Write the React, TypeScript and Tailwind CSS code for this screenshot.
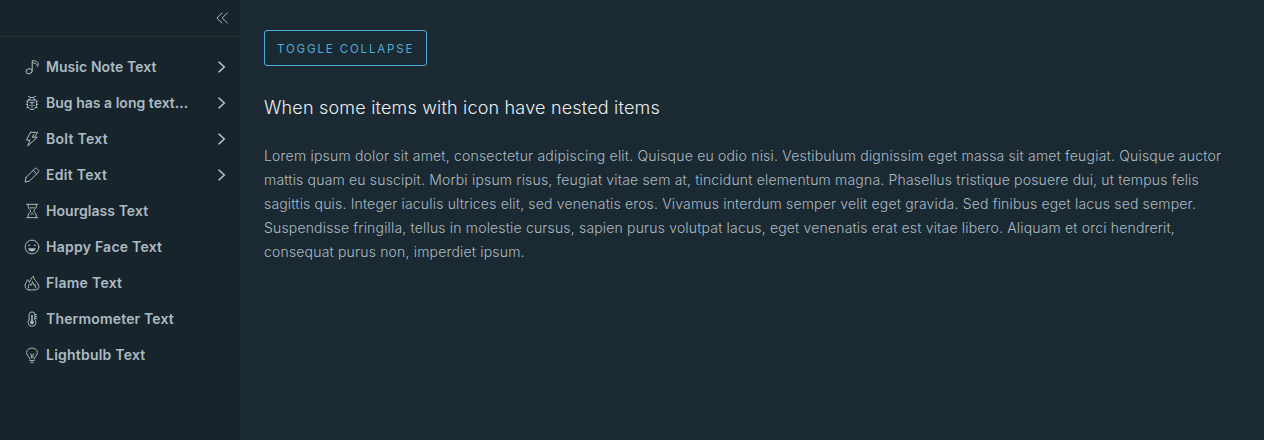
import React, { useState } from "react";

type IconProps = { children: React.ReactNode };

function Icon({ children }: IconProps) {
  return (
    <svg
      viewBox="0 0 36 36"
      className="size-4 shrink-0"
      fill="none"
      stroke="currentColor"
      strokeWidth="2.200"
      strokeLinecap="round"
      strokeLinejoin="round"
      aria-hidden="true"
    >
      {children}
    </svg>
  );
}

const icons = {
  note: (
    <Icon>
      <ellipse cx="11.500" cy="27.500" rx="6.800" ry="5.300" transform="rotate(-18 11.5 27.5)" />
      <path d="M18.500 26V3.500c7 .2 13.500 2.500 13.500 7.500 0 2-.8 4.300-2 6M18.500 8.500c5.500 0 9.500 1.500 11 5" />
    </Icon>
  ),
  bug: (
    <Icon>
      <path d="M11.500 11c0-3.500 3-5.500 6.500-5.500s6.500 2 6.500 5.500M10 3.500h3l1.500 2M26 3.500h-3l-1.500 2M9.500 11.500h17c1.500 2.500 2 5.500 2 8C28.500 28 24 33 18 33S7.500 28 7.500 19.500c0-2.500.5-5.500 2-8ZM18 17v12M13.500 17h9M5.500 14l2 .8M30.500 14l-2 .8M5 21h2.500M31 21h-2.500M6 29l3-1.500M30 29l-3-1.500M12.500 23.500h1M22.500 23.500h1" />
    </Icon>
  ),
  bolt: (
    <Icon>
      <path d="M14.500 3H31l-7.500 11H30L8.500 33.500l5-13H5.500L14.500 3ZM23.500 14H18l4.500-7" />
    </Icon>
  ),
  edit: (
    <Icon>
      <path d="M4.500 23.500 24.500 3.800c1.500-1.500 3.300-1.500 4.800 0l3 3c1.500 1.500 1.500 3.200 0 4.700L12.500 31.500 2.500 34l2-10.500ZM20.500 7.500l8 8" />
    </Icon>
  ),
  hourglass: (
    <Icon>
      <path d="M6 3h25M6 33h25M9.500 3v6.500c0 4 5.500 5.500 5.500 8.500s-5.500 5-5.500 9V33M27.500 3v6.500c0 4-5.500 5.500-5.500 8.500s5.500 5 5.500 9V33M13.500 11h10M15.500 25.500l3-2.500 3 2.500" />
    </Icon>
  ),
  happy: (
    <Icon>
      <circle cx="18" cy="18" r="15.500" />
      <path d="M9.500 21h17c-.5 4.500-4 7-8.500 7s-8-2.500-8.500-7Z" fill="currentColor" stroke="none" />
      <circle cx="11.500" cy="14" r="1.900" fill="currentColor" stroke="none" />
      <circle cx="24.500" cy="14" r="1.900" fill="currentColor" stroke="none" />
    </Icon>
  ),
  flame: (
    <Icon>
      <path d="M11 33.500C5.500 33 2.500 29 2.500 24c0-6 4-7.500 5-13.500 2.500 1.500 4 3.500 4.500 6 3-4 3.500-9 9-14 .5 6 3.500 8 6.500 12 3 4 6 7.500 6 11.500 0 4.500-3 7-7.500 7.500H11ZM10 29c-1-4 .5-6.500 3-9 1.500 1 2 2 2.500 3.500 2-2.500 3-4.500 3.500-8.500 2 4 3.500 5.500 3.500 9 1-1 1.500-1.500 2-3 2 3 2.500 5 1.500 8" />
    </Icon>
  ),
  thermometer: (
    <Icon>
      <path d="M11.500 20V8.500a6.500 6.500 0 0 1 13 0V20c1.700 1.500 2.500 3.300 2.500 5.500a9 9 0 0 1-18 0c0-2.200.8-4 2.500-5.500ZM24.500 8H28M24.500 12.500H28M24.500 17H28" />
      <path d="M18 10v15" strokeWidth="3.500" />
      <circle cx="18" cy="25.500" r="4.300" fill="currentColor" stroke="none" />
    </Icon>
  ),
  bulb: (
    <Icon>
      <path d="M13 27c0-4.500-7-7-7-14.500C6 6.500 11 2.500 18 2.500s12 4 12 10C30 20 23 22.500 23 27M13 30.500h10M15.500 34.500h5M16.500 25v-7l-2-3M20 25v-7l2-3" />
    </Icon>
  ),
};

const items = [
  { label: "Music Note Text", icon: icons.note, nested: true, tracking: "tracking-[0.06px]" },
  { label: "Bug has a long text...", icon: icons.bug, nested: true, tracking: "tracking-[0.02px]" },
  { label: "Bolt Text", icon: icons.bolt, nested: true, tracking: "tracking-[0.29px]" },
  { label: "Edit Text", icon: icons.edit, nested: true, tracking: "tracking-[0.3px]" },
  { label: "Hourglass Text", icon: icons.hourglass, nested: false, tracking: "tracking-[0.05px]" },
  { label: "Happy Face Text", icon: icons.happy, nested: false, tracking: "tracking-[0.24px]" },
  { label: "Flame Text", icon: icons.flame, nested: false, tracking: "tracking-[0.27px]" },
  { label: "Thermometer Text", icon: icons.thermometer, nested: false, tracking: "tracking-[0.17px]" },
  { label: "Lightbulb Text", icon: icons.bulb, nested: false, tracking: "tracking-[0.22px]" },
];

const lines = [
  { text: "Lorem ipsum dolor sit amet, consectetur adipiscing elit. Quisque eu odio nisi. Vestibulum dignissim eget massa sit amet feugiat. Quisque auctor", tracking: "tracking-[0.195px]" },
  { text: "mattis quam eu suscipit. Morbi ipsum risus, feugiat vitae sem at, tincidunt elementum magna. Phasellus tristique posuere dui, ut tempus felis", tracking: "tracking-[0.177px]" },
  { text: "sagittis quis. Integer iaculis ultrices elit, sed venenatis eros. Vivamus interdum semper velit eget gravida. Sed finibus eget lacus sed semper.", tracking: "tracking-[0.167px]" },
  { text: "Suspendisse fringilla, tellus in molestie cursus, sapien purus volutpat lacus, eget venenatis erat est vitae libero. Aliquam et orci hendrerit,", tracking: "tracking-[0.17px]" },
  { text: "consequat purus non, imperdiet ipsum.", tracking: "tracking-[0.18px]" },
];

export default function App() {
  const [collapsed, setCollapsed] = useState(false);
  const toggle = () => setCollapsed(!collapsed);
  return (
    <div className="flex h-[440px] overflow-hidden bg-[#1b2a32] font-['Inter',sans-serif] text-sm text-[#acbac3]">
      <aside className={"flex shrink-0 flex-col overflow-hidden bg-[#17242b] " + (collapsed ? "w-16" : "w-60")}>
        <div className="flex h-[37px] items-center justify-end border-b border-[#20302f] pr-2.5">
          <button aria-label="Toggle navigation" onClick={toggle}>
            <Icon>
              <path d="M18 6.500 6.500 18 18 29.500M30 6.500 18.500 18 30 29.500" />
            </Icon>
          </button>
        </div>
        <nav className="pt-3">
          {items.map((item) => (
            <a key={item.label} className="flex h-9 items-center pr-2.5 pl-6">
              {item.icon}
              {!collapsed && (
                <span className={"ml-1.5 flex-1 font-semibold whitespace-nowrap " + item.tracking}>{item.label}</span>
              )}
              {!collapsed && item.nested && (
                <svg viewBox="0 0 16 16" className="size-4" fill="none" stroke="currentColor" strokeWidth="1.600" strokeLinecap="round">
                  <path d="M5 3.200 10.300 8 5 12.800" />
                </svg>
              )}
            </a>
          ))}
        </nav>
      </aside>
      <main className="min-w-0 flex-1 px-6 pt-[30px]">
        <button
          className="flex h-9 w-[163px] items-center rounded-[3px] border border-[#49afd9] pt-0.5 pl-3 text-[11.5px] tracking-[1.85px] whitespace-nowrap text-[#49afd9]"
          onClick={toggle}
        >
          TOGGLE COLLAPSE
        </button>
        <h1 className="mt-[30px] text-[18px] leading-6 font-light tracking-[0.19px] whitespace-nowrap text-[#eaedf0]">
          When some items with icon have nested items
        </h1>
        <p className="mt-6 leading-6 font-[350] whitespace-nowrap">
          {lines.map((line) => (
            <span key={line.text} className={"block " + line.tracking}>{line.text}</span>
          ))}
        </p>
      </main>
    </div>
  );
}
